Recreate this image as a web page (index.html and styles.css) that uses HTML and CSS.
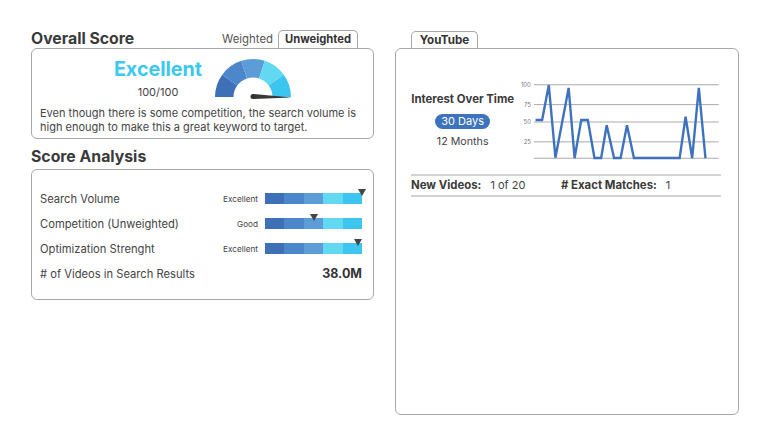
FILE: index.html
```html
<!DOCTYPE html>
<html>
<head>
<meta charset="utf-8">
<link rel="stylesheet" href="styles.css">
</head>
<body>
<div class="page">
  <section class="col left">
    <div class="head">
      <h2 class="title">Overall Score</h2>
      <div class="tabs">
        <span class="tab-plain">Weighted</span>
        <span class="tab active">Unweighted</span>
      </div>
    </div>
    <div class="card score-card">
      <div class="score-top">
        <div class="score-text">
          <div class="grade">Excellent</div>
          <div class="points">100/100</div>
        </div>
        <svg class="gauge" width="78" height="43" viewBox="0 0 78 43">
          <path d="M1,39 A38,38 0 0 1 8.26,16.66 L23.22,27.53 A19.5,19.5 0 0 0 19.5,39 Z" fill="#3e70b8"/>
          <path d="M8.26,16.66 A38,38 0 0 1 27.26,2.86 L32.97,20.46 A19.5,19.5 0 0 0 23.22,27.53 Z" fill="#4c87cb"/>
          <path d="M27.26,2.86 A38,38 0 0 1 50.74,2.86 L45.03,20.46 A19.5,19.5 0 0 0 32.97,20.46 Z" fill="#5c9dd7"/>
          <path d="M50.74,2.86 A38,38 0 0 1 69.74,16.66 L54.78,27.53 A19.5,19.5 0 0 0 45.03,20.46 Z" fill="#62d9f1"/>
          <path d="M69.74,16.66 A38,38 0 0 1 77,39 L58.5,39 A19.5,19.5 0 0 0 54.78,27.53 Z" fill="#3bc5ef"/>
          <path d="M39,36 L77.5,39.5 L39,41 Z" fill="#3a3a3a"/>
          <circle cx="39" cy="38.5" r="2.5" fill="#333"/>
        </svg>
      </div>
      <p class="summary">Even though there is some competition, the search volume is high enough to make this a great keyword to target.</p>
    </div>

    <h2 class="title section-title">Score Analysis</h2>
    <div class="card analysis-card">
      <div class="row">
        <span class="label">Search Volume</span>
        <div class="meter">
          <span class="meter-label">Excellent</span>
          <div class="bar">
            <i class="s1"></i><i class="s2"></i><i class="s3"></i><i class="s4"></i><i class="s5"></i>
            <span class="marker" style="left:100%"></span>
          </div>
        </div>
      </div>
      <div class="row">
        <span class="label">Competition (Unweighted)</span>
        <div class="meter">
          <span class="meter-label">Good</span>
          <div class="bar">
            <i class="s1"></i><i class="s2"></i><i class="s3"></i><i class="s4"></i><i class="s5"></i>
            <span class="marker" style="left:50.3%"></span>
          </div>
        </div>
      </div>
      <div class="row">
        <span class="label">Optimization Strenght</span>
        <div class="meter">
          <span class="meter-label">Excellent</span>
          <div class="bar">
            <i class="s1"></i><i class="s2"></i><i class="s3"></i><i class="s4"></i><i class="s5"></i>
            <span class="marker" style="left:96%"></span>
          </div>
        </div>
      </div>
      <div class="row">
        <span class="label"># of Videos in Search Results</span>
        <span class="big">38.0M</span>
      </div>
    </div>
  </section>

  <section class="col right">
    <div class="yt-head">
      <span class="tab active">YouTube</span>
    </div>
    <div class="card yt-card">
      <div class="trend">
        <div class="trend-side">
          <div class="trend-title">Interest Over Time</div>
          <div class="pill">30 Days</div>
          <div class="alt">12 Months</div>
        </div>
        <svg class="chart" width="210" height="88" viewBox="514 76 210 88">
          <g stroke="#a9a9a9" stroke-width="1">
            <line x1="535" y1="83.5" x2="721" y2="83.5"/>
            <line x1="535" y1="103.5" x2="721" y2="103.5"/>
            <line x1="535" y1="121" x2="721" y2="121"/>
            <line x1="535" y1="141" x2="721" y2="141"/>
            <line x1="535" y1="157.5" x2="721" y2="157.5"/>
          </g>
          <g class="axis" fill="#777" font-size="6" text-anchor="end">
            <text x="532" y="85.5">100</text>
            <text x="532" y="105.5">75</text>
            <text x="532" y="123">50</text>
            <text x="532" y="143">25</text>
          </g>
          <polyline fill="none" stroke="#3e72be" stroke-width="2.4" stroke-linejoin="miter" points="536.7,119 543.3,119 550,84 556.7,157 570,86.7 576,157.3 582.7,119 589.3,119 596,157.3 602.7,157.3 608.3,124.3 615.7,157.3 622.3,157.3 628.7,124.3 635.7,157.3 681.7,157.3 687.7,115.7 694.3,157.3 701,86.7 707.7,157.3"/>
        </svg>
      </div>
      <div class="stats">
        <div class="stat"><b>New Videos:</b><span>1 of 20</span></div>
        <div class="stat"><b># Exact Matches:</b><span>1</span></div>
      </div>
    </div>
  </section>
</div>
</body>
</html>
```

FILE: styles.css
```css
* { box-sizing: border-box; }
html, body { margin: 0; padding: 0; background: #fff; }
body {
  font-family: Inter, "Open Sans", sans-serif;
  color: #3a3a3a;
  width: 768px;
  height: 445px;
  overflow: hidden;
}
.page {
  display: flex;
  gap: 21px;
  padding: 30px 0 0 31px;
}
.col.left { width: 343px; }
.col.right { width: 344px; }

.title {
  margin: 0;
  font-size: 15.8px;
  font-weight: 700;
  line-height: 18px;
  color: #3a3a3a;
}
.head {
  display: flex;
  justify-content: space-between;
  align-items: flex-end;
  height: 18px;
}
.tabs {
  display: flex;
  align-items: flex-end;
  gap: 5px;
  margin-right: 16px;
}
.tab-plain {
  font-size: 11.4px;
  line-height: 17px;
  color: #555;
}
.tab {
  display: inline-block;
  border: 1px solid #a8a8a8;
  border-bottom: none;
  border-radius: 5px 5px 0 0;
  background: #fff;
  font-size: 11.2px;
  font-weight: 700;
  line-height: 17px;
  height: 18px;
  text-align: center;
  color: #333;
}
.tabs .tab { width: 80px; }

.card {
  border: 1px solid #a8a8a8;
  border-radius: 6px;
  background: #fff;
}
.score-card {
  height: 91px;
  padding: 9px 8px 0 8px;
}
.score-top {
  display: flex;
  justify-content: center;
  align-items: flex-start;
  gap: 12px;
  height: 43px;
  padding-left: 1px;
}
.score-text {
  display: flex;
  flex-direction: column;
  align-items: center;
}
.grade {
  font-size: 19.7px;
  font-weight: 700;
  line-height: 22px;
  color: #3cc8f1;
}
.points {
  margin-top: 5px;
  font-size: 11px;
  line-height: 14px;
  color: #444;
}
.gauge { display: block; overflow: visible; }
.summary {
  margin: 5px 0 0 0;
  font-size: 11px;
  line-height: 14px;
  color: #444;
}

.section-title {
  margin-top: 8px;
  margin-bottom: 2px;
  line-height: 20px;
}
.analysis-card {
  height: 131px;
  padding: 16px 11px 0 8px;
}
.row {
  display: flex;
  justify-content: space-between;
  align-items: center;
  height: 25px;
  font-size: 11.2px;
  color: #444;
}
.meter {
  display: flex;
  align-items: center;
  gap: 7px;
}
.meter-label {
  font-size: 8.2px;
  color: #444;
}
.bar {
  position: relative;
  display: flex;
  width: 97px;
  height: 11px;
}
.bar i { flex: 1; display: block; }
.s1 { background: #3e70b8; }
.s2 { background: #4c87cb; }
.s3 { background: #5c9dd7; }
.s4 { background: #62d9f1; }
.s5 { background: #3bc5ef; }
.marker {
  position: absolute;
  top: -4px;
  width: 0;
  height: 0;
  transform: translateX(-50%);
  border-left: 4.5px solid transparent;
  border-right: 4.5px solid transparent;
  border-top: 7px solid #444;
}
.big {
  font-size: 12.5px;
  font-weight: 700;
  color: #333;
}

.yt-head {
  height: 18px;
  display: flex;
  align-items: flex-end;
  padding-left: 16px;
}
.yt-head .tab { width: 67px; height: 17px; line-height: 16px; font-size: 11.6px; }
.yt-card {
  height: 367px;
  padding: 28px 16px 0 15px;
}
.trend {
  display: flex;
  align-items: flex-start;
}
.trend-side {
  width: 104px;
  display: flex;
  flex-direction: column;
  align-items: center;
  padding-top: 15px;
}
.trend-title {
  font-size: 11.4px;
  font-weight: 700;
  line-height: 14px;
  color: #3a3a3a;
  white-space: nowrap;
}
.pill {
  margin-top: 7.5px;
  width: 55px;
  height: 15px;
  border-radius: 8px;
  background: #3d72bd;
  color: #fff;
  font-size: 11px;
  line-height: 15px;
  text-align: center;
}
.alt {
  margin-top: 6.5px;
  font-size: 10.7px;
  line-height: 14px;
  color: #444;
}
.chart { display: block; margin-left: -1px; }
.stats {
  margin-top: 8.5px;
  width: 310px;
  height: 23px;
  border-top: 2px solid #d2d2d2;
  border-bottom: 2px solid #d2d2d2;
  display: grid;
  grid-template-columns: 150px 1fr;
  align-items: center;
  font-size: 11px;
  color: #444;
}
.stat b { font-weight: 700; color: #3a3a3a; margin-right: 9px; font-size: 11.4px; }
```
